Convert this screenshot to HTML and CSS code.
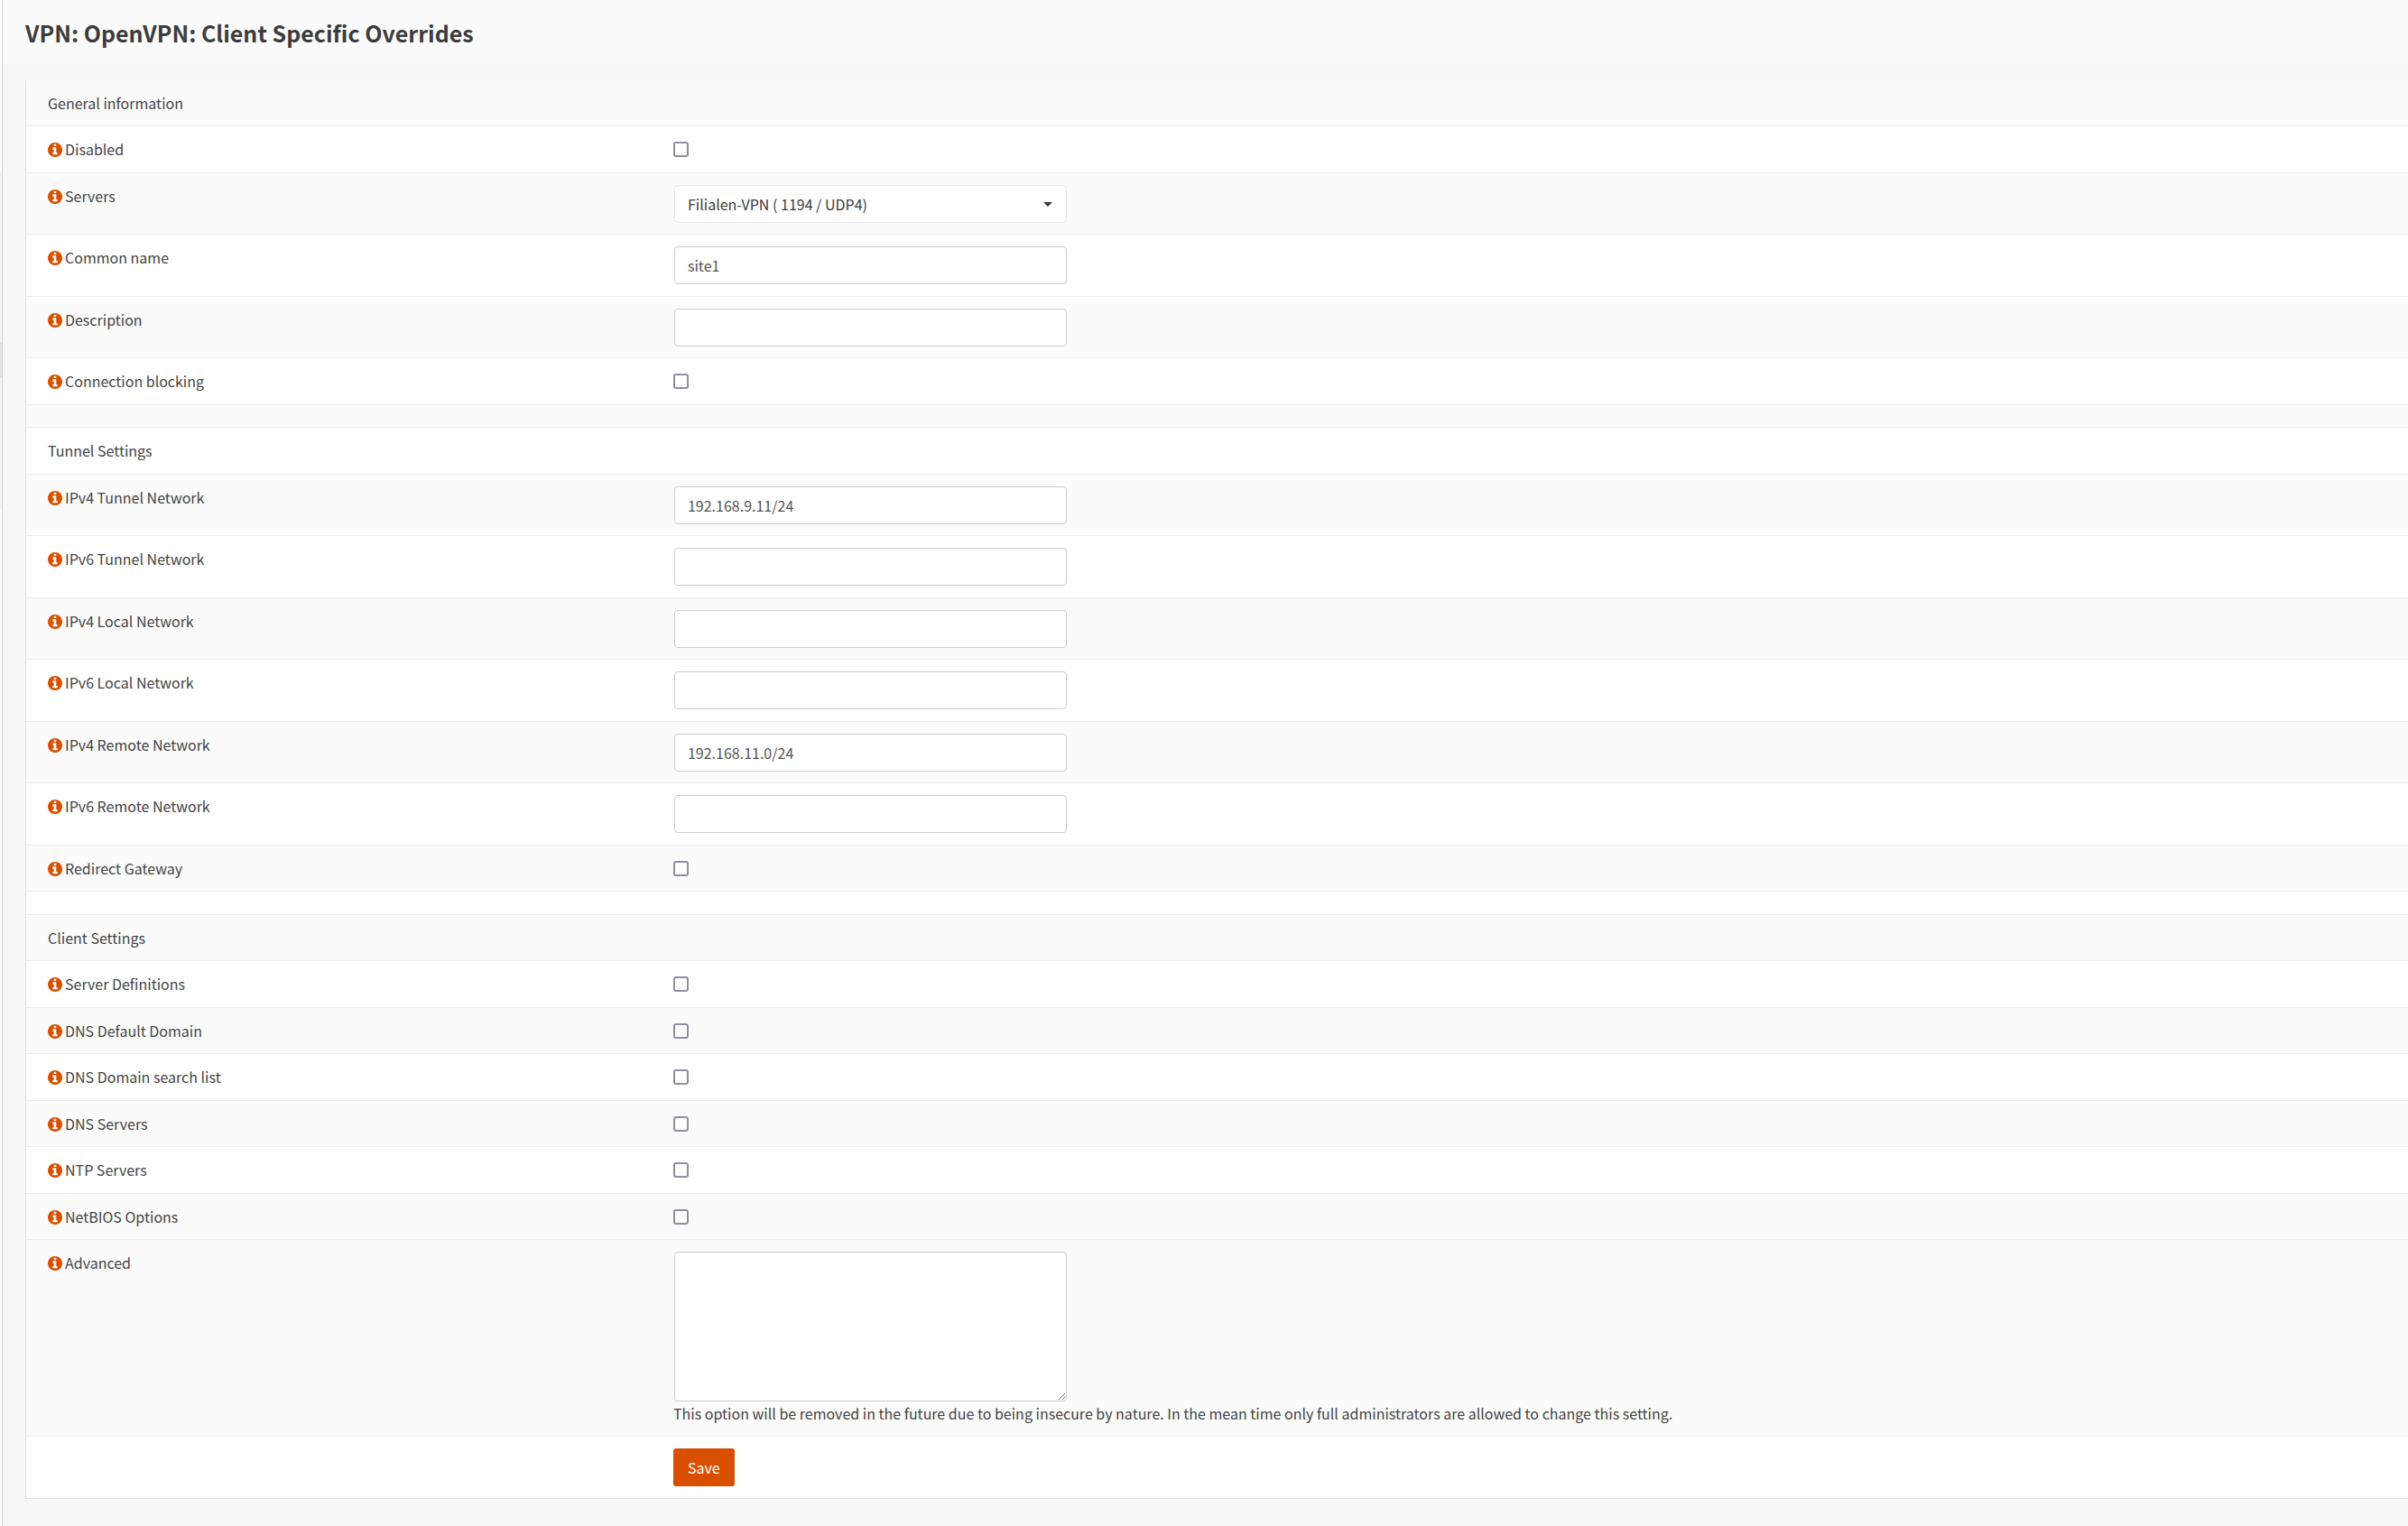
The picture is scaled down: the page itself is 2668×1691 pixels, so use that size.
FILE: index.html
```
<!DOCTYPE html>
<html lang="en">
<head>
    <meta charset="UTF-8">
    <meta name="viewport" content="width=device-width, initial-scale=1.0">
    <title>VPN: OpenVPN: Client Specific Overrides</title>
    <link rel="stylesheet" href="styles.css">
</head>
<body>
    <!-- info icon, reused by every row -->
    <svg class="sprite" aria-hidden="true">
        <symbol id="info" viewBox="0 0 1536 1536">
            <path d="M1024 1248v-160q0-14-9-23t-23-9h-96V544q0-14-9-23t-23-9H544q-14 0-23 9t-9 23v160q0 14 9 23t23 9h96v320h-96q-14 0-23 9t-9 23v160q0 14 9 23t23 9h448q14 0 23-9t9-23zM896 352V192q0-14-9-23t-23-9H672q-14 0-23 9t-9 23v160q0 14 9 23t23 9h192q14 0 23-9t9-23zm640 416q0 209-103 385.500T1153.500 1433 768 1536t-385.500-103T103 1153.500 0 768t103-385.500T382.500 103 768 0t385.500 103T1433 382.500 1536 768z"/>
        </symbol>
    </svg>

    <div class="layout">
        <aside class="sidebar">
            <div class="sidebar-open"></div>
            <div class="sidebar-active"></div>
            <div class="sidebar-items"></div>
        </aside>

        <main class="page">
            <header class="page-head">
                <h1>VPN: OpenVPN: Client Specific Overrides</h1>
            </header>

            <form class="card">
                <div class="row"><h2>General information</h2></div>
                <div class="row">
                    <label for="disabled"><svg class="icon"><use href="#info"/></svg>Disabled</label>
                    <div class="field"><input type="checkbox" id="disabled"></div>
                </div>
                <div class="row">
                    <label for="servers"><svg class="icon"><use href="#info"/></svg>Servers</label>
                    <div class="field">
                        <div class="select">
                            <select id="servers">
                                <option>Filialen-VPN ( 1194 / UDP4)</option>
                            </select>
                        </div>
                    </div>
                </div>
                <div class="row">
                    <label for="commonName"><svg class="icon"><use href="#info"/></svg>Common name</label>
                    <div class="field"><input type="text" id="commonName" value="site1"></div>
                </div>
                <div class="row">
                    <label for="description"><svg class="icon"><use href="#info"/></svg>Description</label>
                    <div class="field"><input type="text" id="description"></div>
                </div>
                <div class="row">
                    <label for="block"><svg class="icon"><use href="#info"/></svg>Connection blocking</label>
                    <div class="field"><input type="checkbox" id="block"></div>
                </div>
                <div class="row spacer"></div>

                <div class="row"><h2>Tunnel Settings</h2></div>
                <div class="row">
                    <label for="tunnel4"><svg class="icon"><use href="#info"/></svg>IPv4 Tunnel Network</label>
                    <div class="field"><input type="text" id="tunnel4" value="192.168.9.11/24"></div>
                </div>
                <div class="row">
                    <label for="tunnel6"><svg class="icon"><use href="#info"/></svg>IPv6 Tunnel Network</label>
                    <div class="field"><input type="text" id="tunnel6"></div>
                </div>
                <div class="row">
                    <label for="local4"><svg class="icon"><use href="#info"/></svg>IPv4 Local Network</label>
                    <div class="field"><input type="text" id="local4"></div>
                </div>
                <div class="row">
                    <label for="local6"><svg class="icon"><use href="#info"/></svg>IPv6 Local Network</label>
                    <div class="field"><input type="text" id="local6"></div>
                </div>
                <div class="row">
                    <label for="remote4"><svg class="icon"><use href="#info"/></svg>IPv4 Remote Network</label>
                    <div class="field"><input type="text" id="remote4" value="192.168.11.0/24"></div>
                </div>
                <div class="row">
                    <label for="remote6"><svg class="icon"><use href="#info"/></svg>IPv6 Remote Network</label>
                    <div class="field"><input type="text" id="remote6"></div>
                </div>
                <div class="row">
                    <label for="gateway"><svg class="icon"><use href="#info"/></svg>Redirect Gateway</label>
                    <div class="field"><input type="checkbox" id="gateway"></div>
                </div>
                <div class="row spacer"></div>

                <div class="row"><h2>Client Settings</h2></div>
                <div class="row">
                    <label for="serverDefs"><svg class="icon"><use href="#info"/></svg>Server Definitions</label>
                    <div class="field"><input type="checkbox" id="serverDefs"></div>
                </div>
                <div class="row">
                    <label for="dnsDomain"><svg class="icon"><use href="#info"/></svg>DNS Default Domain</label>
                    <div class="field"><input type="checkbox" id="dnsDomain"></div>
                </div>
                <div class="row">
                    <label for="dnsSearch"><svg class="icon"><use href="#info"/></svg>DNS Domain search list</label>
                    <div class="field"><input type="checkbox" id="dnsSearch"></div>
                </div>
                <div class="row">
                    <label for="dnsServers"><svg class="icon"><use href="#info"/></svg>DNS Servers</label>
                    <div class="field"><input type="checkbox" id="dnsServers"></div>
                </div>
                <div class="row">
                    <label for="ntp"><svg class="icon"><use href="#info"/></svg>NTP Servers</label>
                    <div class="field"><input type="checkbox" id="ntp"></div>
                </div>
                <div class="row">
                    <label for="netbios"><svg class="icon"><use href="#info"/></svg>NetBIOS Options</label>
                    <div class="field"><input type="checkbox" id="netbios"></div>
                </div>
                
                <div class="row" hidden></div>
                <div class="row">
                    <label for="advanced"><svg class="icon"><use href="#info"/></svg>Advanced</label>
                    <div class="field">
                        <textarea id="advanced"></textarea>
                        <p class="hint">This option will be removed in the future due to being insecure by nature. In the mean time only full administrators are allowed to change this setting.</p>
                    </div>
                </div>
                <div class="row">
                    <div class="label-space"></div>
                    <div class="field"><button type="submit">Save</button></div>
                </div>
            </form>
        </main>
    </div>
</body>
</html>
```
FILE: styles.css
```
* {
    box-sizing: border-box;
}
body {
    margin: 0;
    background-color: #f7f7f7;
    color: #444;
    font-family: "Noto Sans CJK SC", "Noto Sans", sans-serif;
    font-size: 16px;
    line-height: 24px;
}
.sprite {
    display: none;
}
.layout {
    display: flex;
    min-height: 100vh;
}

/* Collapsed menu, only its edge is left */
.sidebar {
    flex: 0 0 3px;
    border-right: 1px solid #d0d0d0;
    background-color: #fff;
    padding-top: 191px;
}
.sidebar-open {
    height: 189px;
    background-color: #f4f4f4;
}
.sidebar-active {
    height: 38px;
    background-color: #e6e6e6;
}
.sidebar-items {
    height: 146px;
    background-color: #f4f4f4;
}

.page {
    flex: 1;
    min-width: 0;
}
.page-head {
    padding: 20px 25px 19px;
    background-color: #fbfbfb;
}
.page-head h1 {
    margin: 0;
    color: #3c3c3b;
    font-size: 25px;
    font-weight: 600;
    line-height: 32px;
}

.card {
    margin: 18px 0 30px 25px;
    border: 1px solid #e1e1e1;
    border-width: 0 0 1px 1px;
}
.row {
    display: flex;
    align-items: flex-start;
    padding: 13px 0 13px 24px;
    border-top: 1px solid #ececec;
    background-color: #fff;
}
.row:nth-child(odd) {
    padding-bottom: 12px;
    background-color: #fbfbfb;
}
.row:first-child {
    border-top: 0;
}
.row.spacer {
    padding-top: 12px;
}
.row[hidden] {
    display: none;
}
.row h2 {
    margin: 0;
    padding-bottom: 1px;
    font-size: 16px;
    font-weight: 400;
}
.row label,
.label-space {
    flex: 0 0 26.5%;
}
.icon {
    width: 16px;
    height: 16px;
    margin-right: 3px;
    fill: #d94f00;
    vertical-align: -2px;
}
.field {
    flex: 1;
    min-width: 0;
}

input[type="text"],
textarea,
select {
    display: block;
    width: 100%;
    height: 42px;
    padding: 8px 14px;
    border: 1px solid #ccc;
    border-radius: 4px;
    background-color: #fff;
    color: #555;
    font: inherit;
}
input[type="text"],
textarea,
.select {
    width: 435px;
    max-width: 100%;
    margin-left: 1px;
}
.select {
    position: relative;
}
.select::after {
    content: "";
    position: absolute;
    top: 19px;
    right: 16px;
    border: 5px solid transparent;
    border-top-color: #3c3c3b;
    border-bottom: 0;
    pointer-events: none;
}
select {
    appearance: none;
    border-color: #e5e5e5;
    color: #3c3c3b;
}
textarea {
    height: 166px;
    resize: both;
}
input[type="checkbox"] {
    appearance: none;
    display: block;
    width: 17px;
    height: 17px;
    margin: 4px 0;
    border: 2px solid #8f8f9d;
    border-radius: 3px;
    background-color: #fff;
}
.hint {
    margin: 0;
    padding: 1px 0;
}
button {
    display: block;
    height: 42px;
    padding: 8px 16px;
    border: 0;
    border-radius: 3px;
    background-color: #d94f00;
    color: #fff;
    font: inherit;
    cursor: pointer;
}
```
